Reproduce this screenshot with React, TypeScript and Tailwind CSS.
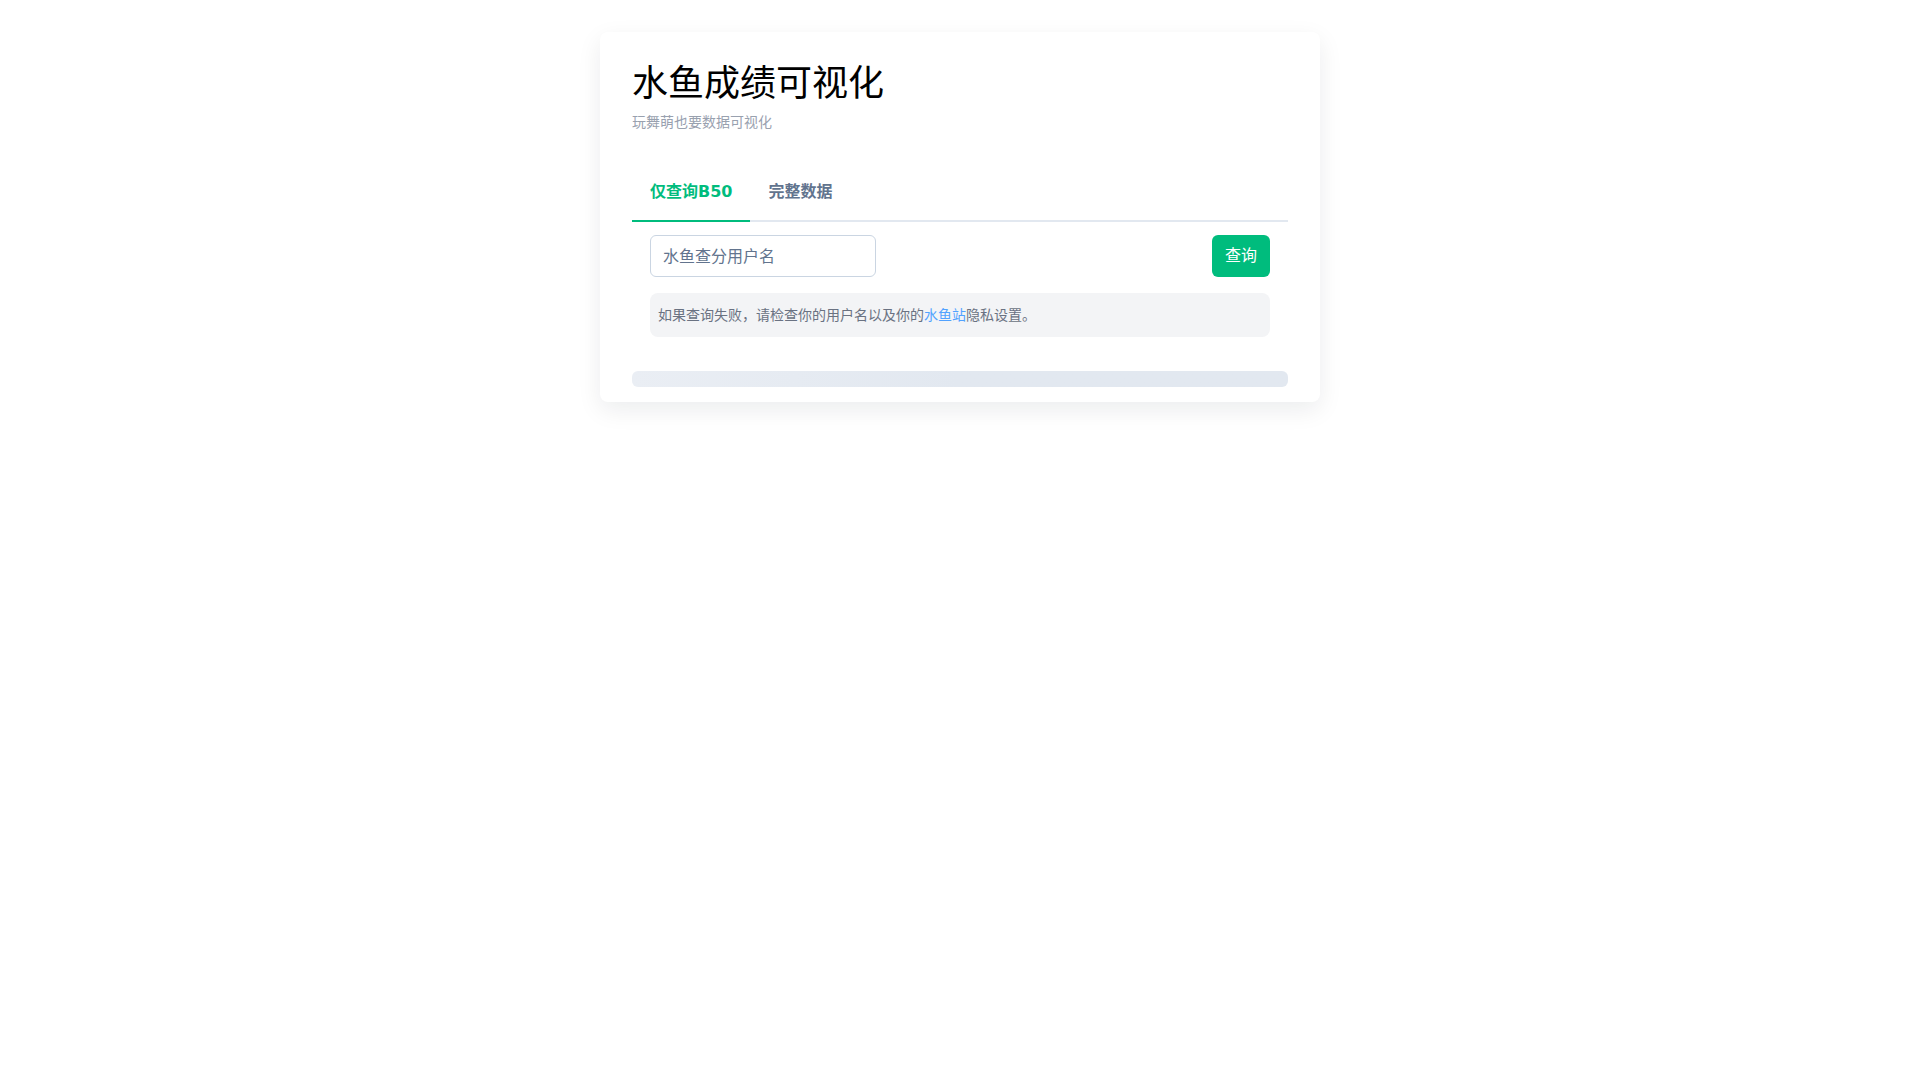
import { useState } from 'react';

type TabKey = 'b50' | 'full';

const tabs: { key: TabKey; label: string }[] = [
  { key: 'b50', label: '仅查询B50' },
  { key: 'full', label: '完整数据' },
];

export default function App() {
  const [tab, setTab] = useState<TabKey>('b50');
  const [username, setUsername] = useState('');

  return (
    <main
      className="min-h-screen bg-white text-black"
      style={{ fontFamily: '"DejaVu Sans", "Noto Sans CJK SC", sans-serif' }}
    >
      <div className="mx-auto mt-8 w-[720px] rounded-lg bg-white px-8 pb-[15px] pt-8 shadow-[0_8px_24px_rgba(15,23,42,0.08)]">
        <header>
          <h1 className="text-4xl leading-10 font-normal">水鱼成绩可视化</h1>
          <p className="mt-2 text-sm leading-5 text-gray-400">玩舞萌也要数据可视化</p>
        </header>

        <nav className="mt-8 flex border-b-2 border-slate-200">
          {tabs.map((t) => (
            <button
              key={t.key}
              className={`-mb-[2px] border-b-2 px-[18px] py-4 text-base leading-6 font-bold ${
                tab === t.key ? 'border-emerald-500 text-emerald-500' : 'border-transparent text-slate-500'
              }`}
              onClick={() => setTab(t.key)}
            >
              {t.label}
            </button>
          ))}
        </nav>

        <section className="px-[18px] pt-[13px]">
          <div className="flex items-center justify-between">
            <input
              className="h-[42px] w-[226px] rounded-md border border-slate-300 px-3 text-base text-slate-700 outline-none placeholder:text-slate-500"
              placeholder="水鱼查分用户名"
              value={username}
              onChange={(e) => setUsername(e.target.value)}
            />
            <button className="h-[42px] rounded-md bg-emerald-500 px-[13px] text-base text-white hover:bg-emerald-600">
              查询
            </button>
          </div>

          <div className="mt-4 rounded-lg bg-gray-100 px-2 py-3 text-sm leading-5 text-gray-500">
            如果查询失败，请检查你的用户名以及你的<span className="text-blue-400">水鱼站</span>隐私设置。
          </div>
        </section>

        <div className="mt-[34px] h-4 rounded-md bg-gradient-to-r from-[#eaeef4] via-[#e2e8f0] to-[#e2e8f0]" />
      </div>
    </main>
  );
}
